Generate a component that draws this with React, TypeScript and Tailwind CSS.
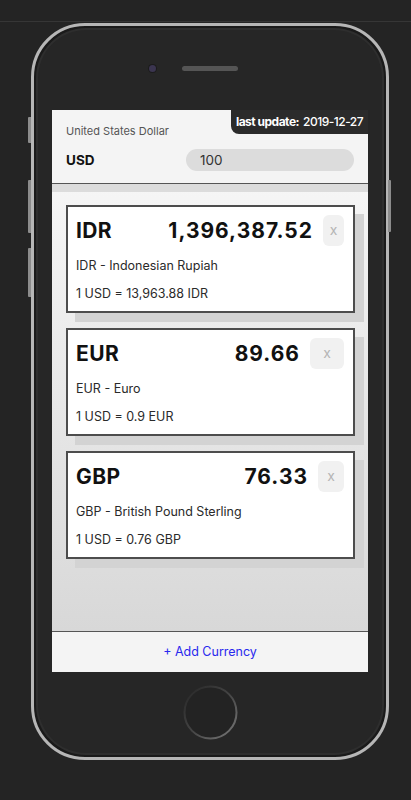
import React from "react";

type Item = { code: string; amount: string; name: string; rate: string; btnW: number };

const items: Item[] = [
  { code: "IDR", amount: "1,396,387.52", name: "IDR - Indonesian Rupiah", rate: "1 USD = 13,963.88 IDR", btnW: 21 },
  { code: "EUR", amount: "89.66", name: "EUR - Euro", rate: "1 USD = 0.9 EUR", btnW: 34 },
  { code: "GBP", amount: "76.33", name: "GBP - British Pound Sterling", rate: "1 USD = 0.76 GBP", btnW: 26 },
];

function Card({ it }: { it: Item }) {
  return (
    <div className="w-[289px] border-2 border-[#4d4d4d] bg-white pl-[8px] pr-[9px] pt-[8px] pb-[9px] shadow-[9px_9px_0_#d3d3d3]">
      <div className="flex h-[31px] items-center">
        <div className="flex-1 text-[21px] font-bold leading-none tracking-[0.4px] text-[#111]">{it.code}</div>
        <div className="mr-[10px] text-[21px] font-bold leading-none tracking-[1px] text-[#111]">{it.amount}</div>
        <div
          className="flex h-[31px] items-center justify-center rounded-[6px] bg-[#f1f1f1] pb-[2px] text-[14px] text-[#b5b5b5]"
          style={{ width: it.btnW }}
        >
          x
        </div>
      </div>
      <div className="mt-[12px] h-[16px] text-[12.5px] leading-[16px] text-[#2a2a2a]">{it.name}</div>
      <div className="mt-[12px] h-[16px] text-[12.5px] leading-[16px] text-[#2a2a2a]">{it.rate}</div>
    </div>
  );
}

export default function App() {
  return (
    <div className="h-[800px] w-[411px] overflow-hidden bg-[#242424]" style={{ fontFamily: "Inter, 'Noto Sans', sans-serif" }}>
      <div className="h-[21px]" />
      <div className="h-[1px] bg-[#363636]" />
      <div className="relative ml-[31px] mt-[1px] h-[737px] w-[358px]">
        {/* side buttons */}
        <div className="absolute left-[-3px] top-[94px] h-[26px] w-[3px] rounded-l-[1px] bg-[#8c8c8c]" />
        <div className="absolute left-[-3px] top-[157px] h-[53px] w-[3px] rounded-l-[1px] bg-[#8c8c8c]" />
        <div className="absolute left-[-3px] top-[225px] h-[49px] w-[3px] rounded-l-[1px] bg-[#8c8c8c]" />
        <div className="absolute right-[-2px] top-[157px] h-[52px] w-[3px] rounded-r-[1px] bg-[#8c8c8c]" />
        <div className="h-full w-full rounded-[54px] border-[3px] border-[#b6b6b6] bg-[#1a1a1a] p-[2px]">
          <div className="h-full w-full rounded-[50px] bg-[#2e2e2e] p-[2px]">
            <div className="flex h-full w-full flex-col items-center rounded-[48px] bg-[#262626]">
              <div className="mt-[35px] flex h-[7px] w-full items-center pl-[111px]">
                <div className="h-[7px] w-[7px] rounded-full bg-[#3b3550] ring-1 ring-[#1c1c1c]" />
                <div className="ml-[26px] h-[5px] w-[56px] rounded-full bg-[#555]" />
              </div>
              {/* screen */}
              <div className="mt-[38px] flex h-[562px] w-[316px] flex-col bg-[#f4f4f4]">
                <div className="relative h-[74px] border-b border-[#555] px-[14px]">
                  <div className="absolute right-0 top-0 flex h-[24px] w-[137px] items-center justify-center whitespace-nowrap rounded-bl-[8px] bg-[#2b2b2b] text-[12px] tracking-[-0.5px] text-white">
                    <span className="font-bold">last update:</span>
                    <span className="ml-[4px] font-medium">2019-12-27</span>
                  </div>
                  <div className="pt-[14px] text-[11px] leading-[14px] text-[#555]">United States Dollar</div>
                  <div className="mt-[11px] flex h-[22px] items-center">
                    <div className="w-[120px] text-[13.5px] font-bold text-[#111]">USD</div>
                    <div className="flex h-[22px] w-[168px] items-center rounded-full bg-[#dcdcdc] pl-[14px] text-[13.5px] text-[#333]">
                      100
                    </div>
                  </div>
                </div>
                <div className="flex-1 bg-gradient-to-b from-[#f6f6f6] to-[#d8d8d8]">
                  <div className="h-[8px] bg-[#dcdcdc]" />
                  <div className="flex flex-col gap-[15px] pl-[14px] pt-[13px]">
                    {items.map((it) => (
                      <Card key={it.code} it={it} />
                    ))}
                  </div>
                </div>
                <div className="flex h-[41px] items-center justify-center border-t border-[#555] bg-[#f4f4f4] text-[12.5px] text-[#2929ee]">
                  + Add Currency
                </div>
              </div>
              {/* home button */}
              <div className="mt-[13px] h-[55px] w-[55px]">
                <svg width="55" height="55" viewBox="0 0 55 55">
                  <defs>
                    <linearGradient id="hb" x1="0" y1="0" x2="1" y2="1">
                      <stop offset="0" stopColor="#262626" />
                      <stop offset="0.5" stopColor="#444" />
                      <stop offset="1" stopColor="#7a7a7a" />
                    </linearGradient>
                  </defs>
                  <circle cx="27.5" cy="27.5" r="26" fill="#232323" stroke="url(#hb)" strokeWidth="2" />
                </svg>
              </div>
            </div>
          </div>
        </div>
      </div>
    </div>
  );
}
